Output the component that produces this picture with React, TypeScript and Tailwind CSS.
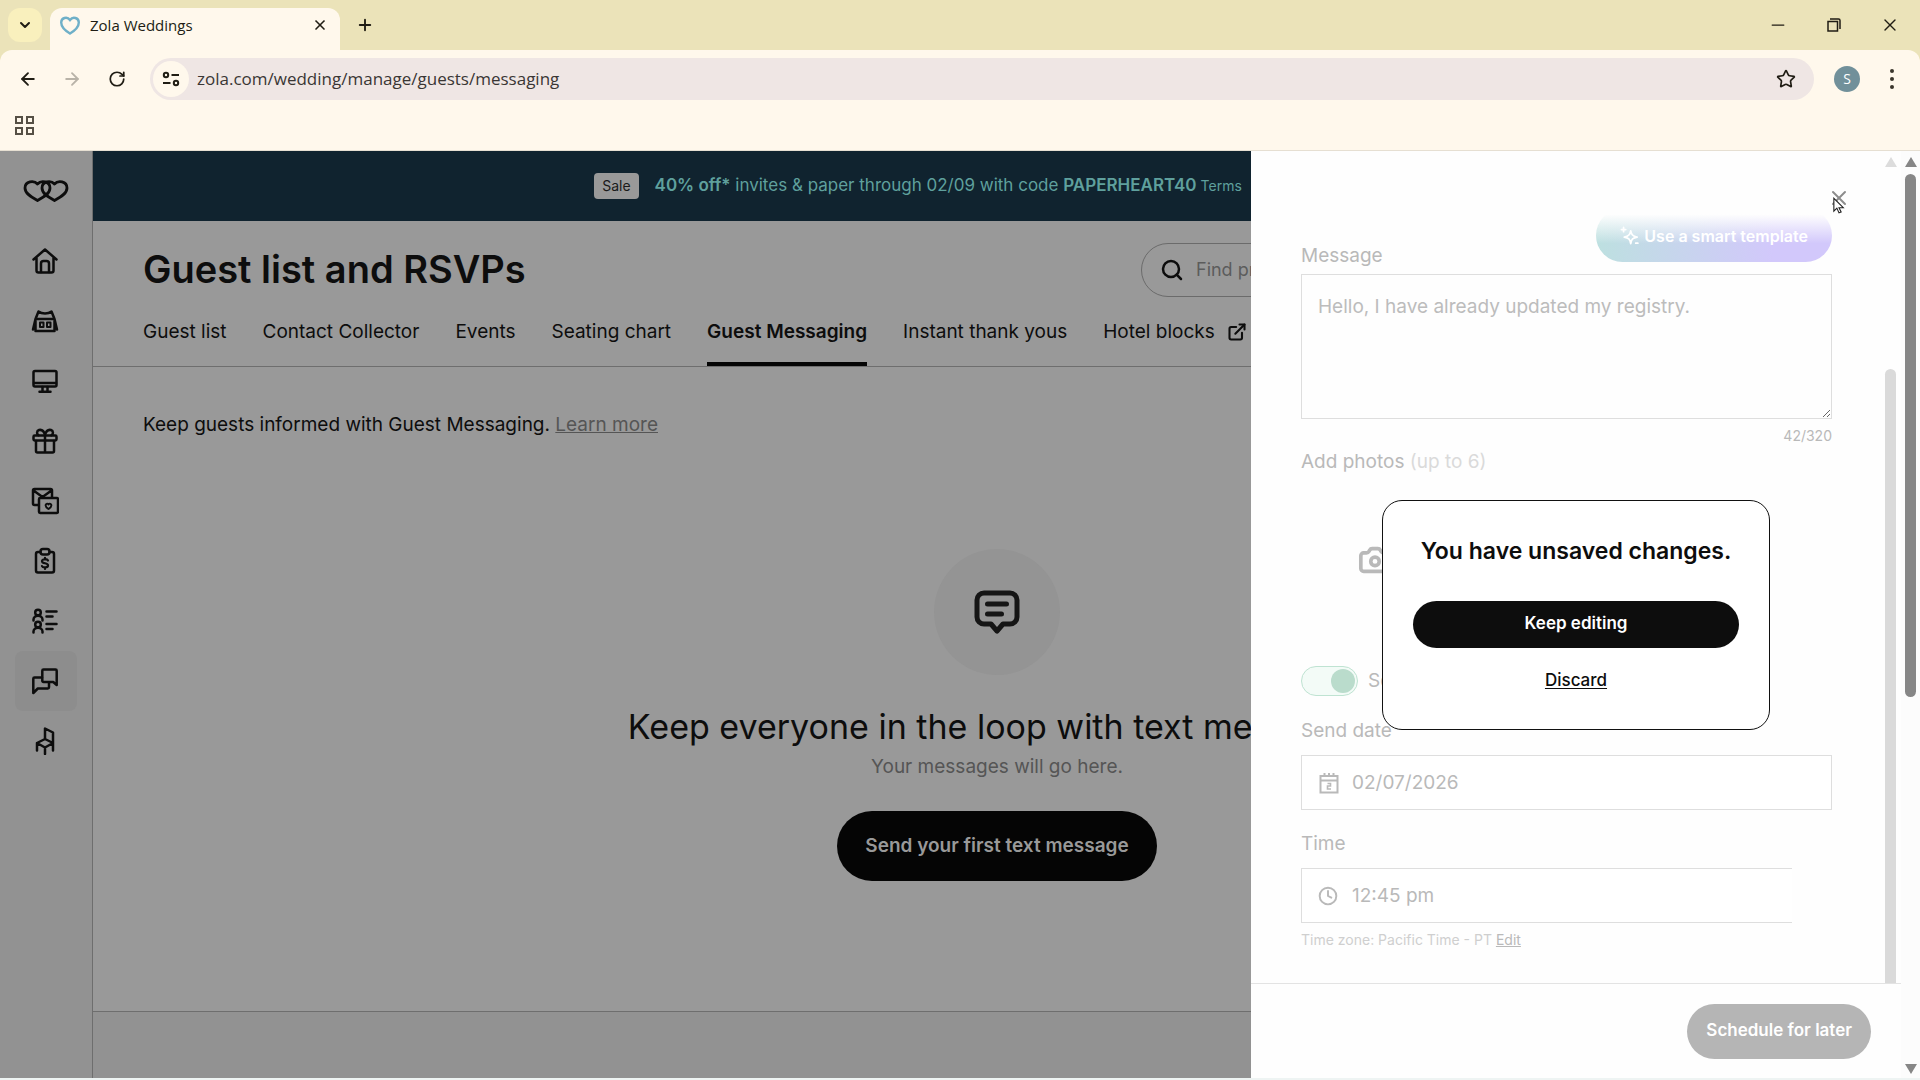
import React from "react";
import {
  ArrowLeft,
  ArrowRight,
  Camera,
  ChevronDown,
  Clock,
  ExternalLink,
  Minus,
  Plus,
  RotateCw,
  Search,
  Star,
  X,
} from "lucide-react";

interface IconProps {
  className?: string;
  children: React.ReactNode;
}

const LineIcon: React.FC<IconProps> = ({ className, children }) => (
  <svg
    viewBox="0 0 28 28"
    className={className ?? "w-7 h-7"}
    fill="none"
    stroke="currentColor"
    strokeWidth="2.5"
    strokeLinecap="round"
    strokeLinejoin="round"
    aria-hidden="true"
  >
    {children}
  </svg>
);

const navItems: { label: string; active?: boolean; icon: React.ReactNode }[] = [
  {
    label: "Home",
    icon: (
      <LineIcon>
        <path d="M2.5 12.5 14 2.5l11.5 10M5.5 11v12.5a2 2 0 0 0 2 2h13a2 2 0 0 0 2-2V11" />
        <path d="M10 25v-8.5a2.5 2.5 0 0 1 2.5-2.5h3a2.5 2.5 0 0 1 2.5 2.5V25" />
      </LineIcon>
    ),
  },
  {
    label: "Venue and vendors",
    icon: (
      <LineIcon>
        <path d="M7.5 4.5c3.5 2.6 9.5 2.6 13 0l3 7.5h-19zM4.5 12 2 22.5M23.5 12 26 22.5M4.5 14v10h19V14" />
        <path d="M9 15.5h3.500V20H9zM16 15.5h3.500V20H16z" strokeWidth="2" />
      </LineIcon>
    ),
  },
  {
    label: "Website",
    icon: (
      <LineIcon>
        <rect x="2.5" y="4" width="23" height="15.5" rx="1.5" />
        <path d="M3 16h22M11.5 20v4.5M16.5 20v4.5M8.5 24.8h11" />
      </LineIcon>
    ),
  },
  {
    label: "Registry",
    icon: (
      <LineIcon>
        <rect x="2.5" y="8.5" width="23" height="5" rx="1.2" />
        <path d="M5 14v10a1.5 1.5 0 0 0 1.5 1.5h15A1.5 1.5 0 0 0 23 24V14M14 8.5v17M14 8c-1-4-3.5-5.5-6-5-2.5.8-2.5 4-.5 5.3M14 8c1-4 3.5-5.5 6-5 2.5.8 2.5 4 .5 5.3" />
      </LineIcon>
    ),
  },
  {
    label: "Invitations",
    icon: (
      <LineIcon>
        <path d="M7 18H3.5A1.5 1.5 0 0 1 2 16.5v-13A1.5 1.5 0 0 1 3.5 2h16A1.5 1.5 0 0 1 21 3.5V10M2.5 3.5l9 6.5 9-6.5" />
        <rect x="8" y="11" width="19" height="15" rx="1.2" />
        <path d="M17.5 22c-5.5-3.5-1.5-7 0-4.5 1.5-2.5 5.5 1 0 4.5z" strokeWidth="1.9" />
      </LineIcon>
    ),
  },
  {
    label: "Budget",
    icon: (
      <LineIcon>
        <path d="M9.5 5H7a2 2 0 0 0-2 2v16.5a2 2 0 0 0 2 2h14a2 2 0 0 0 2-2V7a2 2 0 0 0-2-2h-2.5" />
        <rect x="9.5" y="2" width="9" height="5.5" rx="2.5" />
        <path d="M17 13.5c-.8-1.8-6-1.8-6 .7 0 2.8 6 1.4 6 4.2 0 2.5-5.2 2.5-6 .7M14 10.8v1.5M14 20.5V22" strokeWidth="2.2" />
      </LineIcon>
    ),
  },
  {
    label: "Guest list",
    icon: (
      <LineIcon>
        <circle cx="7" cy="5.5" r="2.8" />
        <path d="M2.5 13.5v-1c0-5 9-5 9 0v1" />
        <circle cx="7" cy="17.5" r="2.8" />
        <path d="M2.5 25.5v-1c0-5 9-5 9 0v1M15.5 4.5h10M15.5 9.5h6M15.5 17h10M15.5 22h6" />
      </LineIcon>
    ),
  },
  {
    label: "Messaging",
    active: true,
    icon: (
      <LineIcon>
        <path d="M11 10.5H3.5A1.2 1.2 0 0 0 2.3 11.7V26l4.5-4.5h10a1.2 1.2 0 0 0 1.2-1.2V16" />
        <path d="M12.5 2.5h12a1.2 1.2 0 0 1 1.2 1.2V18l-3.5-3h-9.7a1.2 1.2 0 0 1-1.2-1.2V3.7a1.2 1.2 0 0 1 1.2-1.2z" />
      </LineIcon>
    ),
  },
  {
    label: "Seating",
    icon: (
      <LineIcon>
        <path d="M14 1.5V12l8 4V5.5zM14 12l-8 4 8 4.5 8-4.5M6 16v7.5M22 16v7.5M14 20.5V27" />
      </LineIcon>
    ),
  },
];

const tabs = [
  "Guest list",
  "Contact Collector",
  "Events",
  "Seating chart",
  "Guest Messaging",
  "Instant thank yous",
  "Hotel blocks",
];

const BrowserChrome: React.FC = () => (
  <header className="shrink-0 bg-[#ebe3b9] font-['Open_Sans',sans-serif] text-[#201d14]">
    <div className="flex h-[50px] items-center">
      <button
        aria-label="Search tabs"
        className="ml-2 flex size-[34px] items-center justify-center rounded-xl bg-[#f9f0bd]"
      >
        <ChevronDown className="size-4" strokeWidth={3} />
      </button>
      <div className="ml-2 mt-2 flex h-[42px] w-[290px] items-center self-end rounded-t-xl bg-[#fff8ec] pl-2 pr-3 pb-2">
        <svg viewBox="0 0 24 24" className="size-6" fill="none" aria-hidden="true">
          <path
            d="M12 20.5C7 17.5 3.2 14 3.2 9.5 3.2 5 9 2.8 12 7c3-4.2 8.8-2 8.8 2.5 0 4.5-3.8 8-8.8 11z"
            stroke="#6fb0c8"
            strokeWidth="2.4"
          />
        </svg>
        <span className="ml-2 flex-1 text-[15px]">Zola Weddings</span>
        <button aria-label="Close tab">
          <X className="size-4" strokeWidth={2.5} />
        </button>
      </div>
      <button aria-label="New tab" className="ml-4">
        <Plus className="size-[18px]" strokeWidth={2.5} />
      </button>
      <div className="ml-auto flex items-center gap-9 pr-5">
        <button aria-label="Minimize">
          <Minus className="size-5" strokeWidth={1.5} />
        </button>
        <button aria-label="Restore">
          <svg viewBox="0 0 20 20" className="size-5" fill="none" stroke="currentColor" strokeWidth="1.5" aria-hidden="true">
            <path d="M4 6.5h9.5V16H4zM6 4h8.5a1.5 1.5 0 0 1 1.5 1.5V14" />
          </svg>
        </button>
        <button aria-label="Close">
          <X className="size-5" strokeWidth={1.6} />
        </button>
      </div>
    </div>
    <div className="flex h-[58px] items-center rounded-t-xl bg-[#fff8ec] pl-[18px] pr-5">
      <button aria-label="Back">
        <ArrowLeft className="size-5" strokeWidth={2.2} />
      </button>
      <button aria-label="Forward" className="ml-6 text-[#b9b3a8]">
        <ArrowRight className="size-5" strokeWidth={2.2} />
      </button>
      <button aria-label="Reload" className="ml-[26px]">
        <RotateCw className="size-[18px]" strokeWidth={2.3} />
      </button>
      <div className="ml-6 flex h-[42px] flex-1 items-center rounded-full bg-[#efe6e4] pl-[3px] pr-[18px]">
        <button
          aria-label="Site information"
          className="flex size-9 items-center justify-center rounded-full bg-[#fff8ec]"
        >
          <svg viewBox="0 0 20 20" className="size-5" fill="none" stroke="currentColor" strokeWidth="2" aria-hidden="true">
            <circle cx="5" cy="6" r="2.2" />
            <circle cx="15" cy="14" r="2.2" />
            <path d="M10.5 6H18M2 14h7.5" />
          </svg>
        </button>
        <input
          aria-label="Address"
          className="ml-2 flex-1 bg-transparent text-[17px] text-[#3a3634] outline-none"
          defaultValue="zola.com/wedding/manage/guests/messaging"
        />
        <button aria-label="Bookmark">
          <Star className="size-5" strokeWidth={2} />
        </button>
      </div>
      <span className="ml-5 flex size-[26px] items-center justify-center rounded-full bg-[#71909a] text-sm text-white">
        S
      </span>
      <button aria-label="Menu" className="ml-6 flex w-4 flex-col items-center gap-1">
        <i className="size-1 rounded-full bg-[#3a362c]" />
        <i className="size-1 rounded-full bg-[#3a362c]" />
        <i className="size-1 rounded-full bg-[#3a362c]" />
      </button>
    </div>
    <div className="h-[43px] border-b border-[#e6dfd2] bg-[#fff8ec] pl-[15px] pt-2">
      <button aria-label="Apps" className="grid grid-cols-2 gap-[3px]">
        <i className="size-2 border-2 border-[#565045]" />
        <i className="size-2 border-2 border-[#565045]" />
        <i className="size-2 border-2 border-[#565045]" />
        <i className="size-2 border-2 border-[#565045]" />
      </button>
    </div>
  </header>
);

const Sidebar: React.FC = () => (
  <nav className="flex w-[93px] shrink-0 flex-col items-center border-r border-[#6e6e6e] bg-[#929292] pt-6 text-[#0d0d0d]">
    <a href="#zola" aria-label="Zola" className="mb-6">
      <svg viewBox="0 0 46 32" className="h-8 w-[46px]" fill="none" stroke="currentColor" strokeWidth="2.8" strokeLinejoin="round">
        <path d="M14.5 25.5C8 22 2 18.5 2 13c0-7 9-8 12.5-4C18 5 27 6 27 13c0 5.5-6 9-12.5 12.5z" />
        <path d="M31.5 25.5C25 22 19 18.5 19 13c0-7 9-8 12.5-4C35 5 44 6 44 13c0 5.5-6 9-12.5 12.5z" />
      </svg>
    </a>
    {navItems.map((item) => (
      <a
        key={item.label}
        href="#nav"
        aria-label={item.label}
        className={`flex h-[60px] w-[62px] items-center justify-center rounded-lg pr-[2px] ${item.active ? "bg-[#8d8d8d]" : ""}`}
      >
        {item.icon}
      </a>
    ))}
  </nav>
);

const Banner: React.FC = () => (
  <div className="flex h-[70px] items-center justify-center bg-[#10232f] pr-[158px] text-[#5fa09d]">
    <span className="rounded bg-[#999] px-2 text-sm leading-[26px] text-[#1a1a1a]">Sale</span>
    <p className="ml-4 whitespace-nowrap text-[17px]">
      <b className="font-semibold">40% off*</b> invites &amp; paper through 02/09 with code{" "}
      <b className="font-semibold">PAPERHEART40</b>
    </p>
    <a href="#terms" className="ml-1 text-sm">
      Terms
    </a>
  </div>
);

const GuestPage: React.FC = () => (
  <main className="flex min-w-0 flex-1 flex-col overflow-hidden bg-[#999] text-[#0d0d0d]">
    <Banner />
    <div className="flex h-[97px] items-center justify-between pl-[50px] pr-[50px]">
      <h1 className="text-[38px] font-semibold">Guest list and RSVPs</h1>
      <label className="flex h-[54px] w-[710px] items-center rounded-full border border-[#6b6b6b] pl-[18px]">
        <Search className="size-6" strokeWidth={2.5} />
        <input
          aria-label="Find products"
          placeholder="Find products, registries, and more"
          className="ml-3 flex-1 bg-transparent text-lg outline-none placeholder:text-[#5c5c5c]"
        />
      </label>
    </div>
    <div className="flex h-[49px] items-stretch gap-9 border-b border-[#6e6e6e] pl-[50px] text-[19px] leading-7">
      {tabs.map((tab) => (
        <a
          key={tab}
          href="#tab"
          className={`flex items-start gap-3 whitespace-nowrap border-b-4 ${tab === "Guest Messaging" ? "border-[#050505] font-semibold" : "border-transparent"}`}
        >
          {tab}
          {tab === "Hotel blocks" && <ExternalLink className="mt-1 size-5" strokeWidth={2.5} />}
        </a>
      ))}
    </div>
    <p className="pl-[50px] pt-11 text-[19px] leading-7">
      Keep guests informed with Guest Messaging.{" "}
      <a href="#learn" className="text-[#555] underline">
        Learn more
      </a>
    </p>
    <div className="mt-[110px] flex flex-col items-center">
      <div className="flex size-[126px] items-center justify-center rounded-full bg-[#949494]">
        <svg viewBox="0 0 46 44" className="h-11 w-[46px]" fill="none" stroke="#151515" strokeWidth="5" strokeLinecap="round" strokeLinejoin="round">
          <path d="M10 3h26a7 7 0 0 1 7 7v17a7 7 0 0 1-7 7h-7l-6 7-6-7h-7a7 7 0 0 1-7-7V10a7 7 0 0 1 7-7z" />
          <path d="M13.5 14h19M13.5 24h14" />
        </svg>
      </div>
      <h2 className="mt-6 whitespace-nowrap text-[34px] leading-[56px]">
        Keep everyone in the loop with text messages
      </h2>
      <p className="text-[19px] leading-6 text-[#555]">Your messages will go here.</p>
      <button className="mt-8 h-[70px] rounded-full bg-[#050505] px-7 text-[19px] font-semibold text-[#999]">
        Send your first text message
      </button>
    </div>
    <footer className="mt-auto h-[67px] border-t border-[#6e6e6e] bg-[#929292]" />
  </main>
);

const UnsavedDialog: React.FC = () => (
  <div
    role="dialog"
    aria-label="You have unsaved changes."
    className="absolute left-1/2 top-1/2 flex h-[230px] w-[388px] -translate-x-1/2 -translate-y-1/2 flex-col items-center rounded-[20px] border border-[#111] bg-white px-[30px] pt-8 text-[#0d0d0d]"
  >
    <h2 className="whitespace-nowrap text-[23px] leading-9 font-semibold">You have unsaved changes.</h2>
    <button className="mt-8 h-[47px] w-full rounded-full bg-[#0d0d0d] text-[17px] font-semibold text-white">
      Keep editing
    </button>
    <button className="mt-5 text-[17px] font-medium underline underline-offset-2">Discard</button>
  </div>
);

const fieldBox = "flex items-center border border-[#dedede] bg-white";

const MessageDrawer: React.FC = () => (
  <aside className="absolute inset-y-0 right-[19px] flex w-[650px] flex-col bg-[#fefefe] text-[#b9b9b9]">
    <div className="flex min-h-0 flex-1 border-b border-[#e3e3e3]">
      <form className="min-w-0 flex-1 pl-[50px] pr-[50px] pt-[58px] text-[19px] leading-7">
        <div className="flex h-[65px] items-start justify-between">
          <label htmlFor="message" className="mt-[33px]">
            Message
          </label>
          <button
            type="button"
            className="flex h-[53px] items-center rounded-full bg-[linear-gradient(to_bottom,#fefefe_10%,#fefefe00_65%),linear-gradient(to_right,#bde0e0,#d2c8fb_75%)] px-6 text-base font-semibold text-white"
          >
            <LineIcon className="mr-1 size-5">
              <path d="M15 7c1 5.5 3 7.5 9 8.5-6 1-8 3-9 9-1-6-3-8-9-9 6-1 8-3 9-8.5zM5 2v6M2 5h6M22 24h3" />
            </LineIcon>
            Use a smart template
          </button>
        </div>
        <textarea
          id="message"
          className="block h-[145px] w-full border border-[#dedede] px-4 py-[18px] text-[#bcbcbc] outline-none"
          defaultValue="Hello, I have already updated my registry."
        />
        <p className="mt-[7px] text-right text-sm">42/320</p>
        <p className="mt-[2px]">
          Add photos <span className="text-[#dadada]">(up to 6)</span>
        </p>
        <div className="flex h-[191px] items-center pb-6 pl-[57px]">
          <Camera className="size-[34px]" strokeWidth={2.6} />
        </div>
        <label className="flex h-7 items-center gap-[10px]">
          <input
            type="checkbox"
            defaultChecked
            className="flex h-[30px] w-[57px] shrink-0 appearance-none items-center justify-end rounded-full border border-[#bfe3d2] bg-[#f3fbf7] pr-[2px] before:size-6 before:rounded-full before:bg-[#badccc] before:content-['']"
          />
          Schedule for later
        </label>
        <label htmlFor="send-date" className="mt-[22px] block w-fit">
          Send date
        </label>
        <div className={`${fieldBox} mt-[10px] h-[55px] px-4`}>
          <svg viewBox="0 0 22 22" className="size-[22px]" fill="none" stroke="currentColor" strokeWidth="2" aria-hidden="true">
            <path d="M2.5 4h17v16.5h-17zM2.5 8.5h17M6.500 1v4M11 1v4M15.500 1v4" />
            <path d="M9.5 11.5h3V14h-3v3h3.500" strokeWidth="1.6" />
          </svg>
          <input id="send-date" className="ml-3 min-w-0 flex-1 outline-none" defaultValue="02/07/2026" />
        </div>
        <label htmlFor="time" className="mt-5 block">
          Time
        </label>
        <div className={`${fieldBox} mr-10 mt-[10px] h-[55px] border-r-0 px-4`}>
          <Clock className="size-[20px]" strokeWidth={2.3} />
          <input id="time" className="ml-[14px] min-w-0 flex-1 outline-none" defaultValue="12:45 pm" />
        </div>
        <p className="mt-[7px] text-sm text-[#cfcfcf]">
          Time zone: Pacific Time - PT{" "}
          <a href="#edit" className="text-[#b9b9b9] underline">
            Edit
          </a>
        </p>
      </form>
      <div className="flex w-[19px] flex-col items-center pr-[2px] pt-[6px]">
        <svg viewBox="0 0 12 10" className="h-[10px] w-3" fill="#dcdcdc" aria-hidden="true">
          <path d="M6 0l6 10H0z" />
        </svg>
        <div className="mt-[202px] w-[11px] flex-1 rounded-t-full bg-[#dadada]" />
      </div>
    </div>
    <div className="flex h-[94px] shrink-0 items-center justify-end pr-[30px]">
      <button className="h-[55px] rounded-full bg-[#b5b5b5] px-[19px] text-[17px] font-semibold text-white">
        Schedule for later
      </button>
    </div>
    <button aria-label="Close panel" className="absolute right-[50px] top-[35px] text-[#8c8c8c]">
      <X className="size-6" strokeWidth={2} />
    </button>
    <svg viewBox="0 0 14 20" className="absolute right-[56px] top-[46px] h-[18px] w-3" fill="#fff" stroke="#222" strokeWidth="1.3" aria-hidden="true">
      <path d="M1 1v15l3.5-3.5L7 18l2.5-1-2.5-5h5z" />
    </svg>
    <UnsavedDialog />
  </aside>
);

const PageScrollbar: React.FC = () => (
  <div className="flex w-[19px] shrink-0 flex-col items-center bg-[#fcfcfc] pb-1 pt-[6px]">
    <svg viewBox="0 0 12 10" className="h-[10px] w-3" fill="#868686" aria-hidden="true">
      <path d="M6 0l6 10H0z" />
    </svg>
    <div className="mt-[7px] h-[57%] w-[11px] rounded-full bg-[#868686]" />
    <svg viewBox="0 0 12 10" className="mt-auto h-[10px] w-3" fill="#868686" aria-hidden="true">
      <path d="M0 0h12L6 10z" />
    </svg>
  </div>
);

export default function App() {
  return (
    <div className="flex h-screen flex-col overflow-hidden bg-[#eef4f3] pb-[2px] font-[Inter,sans-serif]">
      <BrowserChrome />
      <div className="relative flex min-h-0 flex-1">
        <Sidebar />
        <GuestPage />
        <PageScrollbar />
        <MessageDrawer />
      </div>
    </div>
  );
}
